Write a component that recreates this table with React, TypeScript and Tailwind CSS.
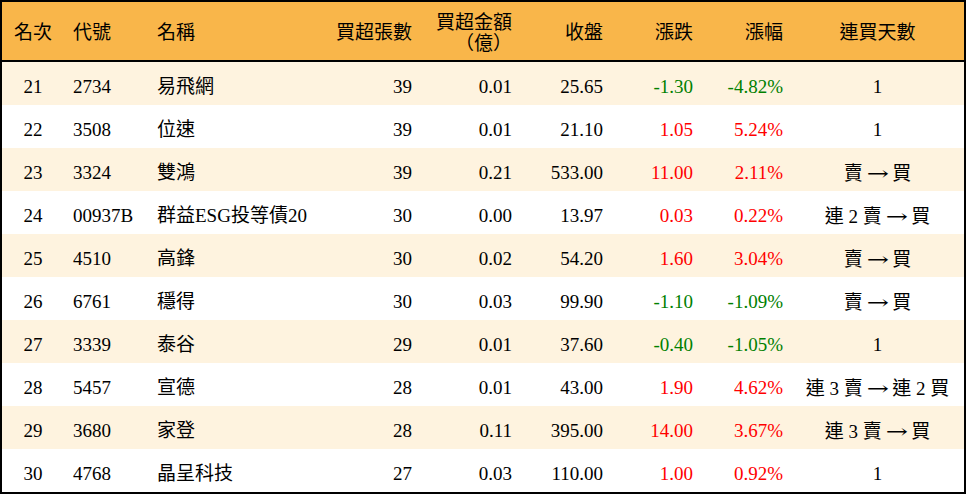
import cn from "clsx";

type Row = {
  rank: number;
  code: string;
  name: string;
  lots: number;
  amount: string;
  close: string;
  change: string;
  pct: string;
  streak: string[];
};

const rows: Row[] = [
  { rank: 21, code: "2734", name: "易飛網", lots: 39, amount: "0.01", close: "25.65", change: "-1.30", pct: "-4.82%", streak: ["1"] },
  { rank: 22, code: "3508", name: "位速", lots: 39, amount: "0.01", close: "21.10", change: "1.05", pct: "5.24%", streak: ["1"] },
  { rank: 23, code: "3324", name: "雙鴻", lots: 39, amount: "0.21", close: "533.00", change: "11.00", pct: "2.11%", streak: ["賣", "買"] },
  { rank: 24, code: "00937B", name: "群益ESG投等債20", lots: 30, amount: "0.00", close: "13.97", change: "0.03", pct: "0.22%", streak: ["連 2 賣", "買"] },
  { rank: 25, code: "4510", name: "高鋒", lots: 30, amount: "0.02", close: "54.20", change: "1.60", pct: "3.04%", streak: ["賣", "買"] },
  { rank: 26, code: "6761", name: "穩得", lots: 30, amount: "0.03", close: "99.90", change: "-1.10", pct: "-1.09%", streak: ["賣", "買"] },
  { rank: 27, code: "3339", name: "泰谷", lots: 29, amount: "0.01", close: "37.60", change: "-0.40", pct: "-1.05%", streak: ["1"] },
  { rank: 28, code: "5457", name: "宣德", lots: 28, amount: "0.01", close: "43.00", change: "1.90", pct: "4.62%", streak: ["連 3 賣", "連 2 買"] },
  { rank: 29, code: "3680", name: "家登", lots: 28, amount: "0.11", close: "395.00", change: "14.00", pct: "3.67%", streak: ["連 3 賣", "買"] },
  { rank: 30, code: "4768", name: "晶呈科技", lots: 27, amount: "0.03", close: "110.00", change: "1.00", pct: "0.92%", streak: ["1"] },
];

const gridClass =
  "grid grid-cols-[62px_84px_182px_90px_100px_91px_90px_90px_1fr] items-center";

function Streak({ parts }: { parts: string[] }) {
  if (parts.length === 1) return <>{parts[0]}</>;
  return (
    <>
      {parts[0]}{" "}
      <span className="inline-block scale-x-[1.4] px-[2px]" style={{ fontFamily: '"DejaVu Serif", serif' }}>
        →
      </span>{" "}
      {parts[1]}
    </>
  );
}

export default function App() {
  return (
    <div className="w-[966px] h-[496px] bg-white">
      <div
        className="border-2 border-black text-[19px] text-black"
        style={{ fontFamily: '"Liberation Serif", "Noto Sans CJK TC", serif' }}
      >
        {/* header */}
        <div className={cn(gridClass, "h-[60px] pt-1 bg-[#f9b64a] border-b-2 border-black")}>
          <div className="text-center">名次</div>
          <div className="pl-[9px]">代號</div>
          <div className="pl-[9px]">名稱</div>
          <div className="pr-2 text-right">買超張數</div>
          <div className="pr-2 text-right leading-[21px]">
            買超金額
            <br />
            <span className="inline-block w-[19px] text-right">（</span>億
            <span className="inline-block w-[19px] text-left">）</span>
          </div>
          <div className="pr-2 text-right">收盤</div>
          <div className="pr-2 text-right">漲跌</div>
          <div className="pr-2 text-right">漲幅</div>
          <div className="text-center">連買天數</div>
        </div>
        {/* body */}
        {rows.map((r, i) => {
          const down = r.change.startsWith("-");
          return (
            <div
              key={r.rank}
              className={cn(gridClass, "h-[43px] pt-2", i % 2 === 0 ? "bg-[#fef3df]" : "bg-white")}
            >
              <div className="text-center">{r.rank}</div>
              <div className="pl-[9px]">{r.code}</div>
              <div className="pl-[9px] whitespace-nowrap">{r.name}</div>
              <div className="pr-2 text-right">{r.lots}</div>
              <div className="pr-2 text-right">{r.amount}</div>
              <div className="pr-2 text-right">{r.close}</div>
              <div className={cn("pr-2 text-right", down ? "text-[#008000]" : "text-[#ff0000]")}>
                {r.change}
              </div>
              <div className={cn("pr-2 text-right", down ? "text-[#008000]" : "text-[#ff0000]")}>
                {r.pct}
              </div>
              <div className="text-center whitespace-nowrap">
                <Streak parts={r.streak} />
              </div>
            </div>
          );
        })}
      </div>
    </div>
  );
}
